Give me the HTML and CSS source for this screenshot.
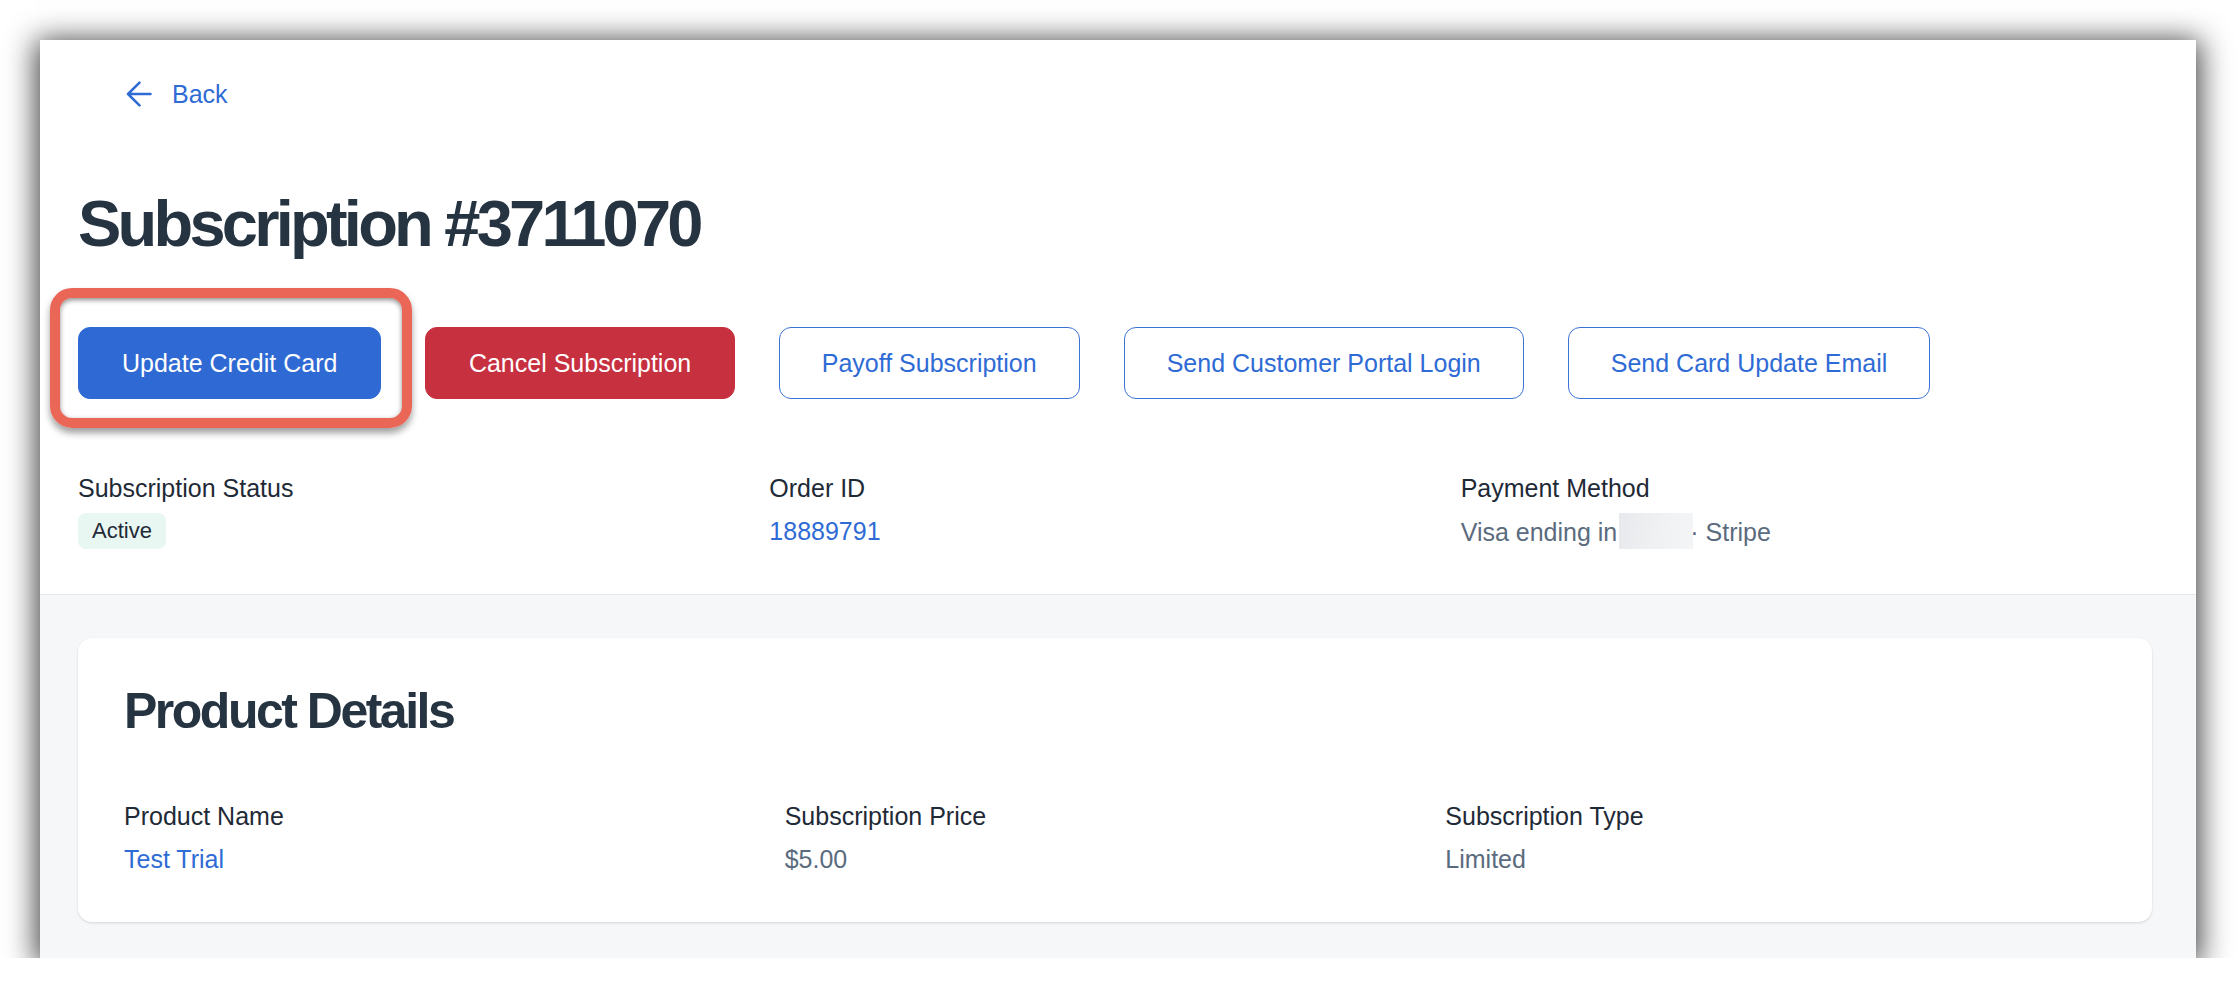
FILE: index.html
```html
<!DOCTYPE html>
<html lang="en">
<head>
<meta charset="utf-8">
<title>Subscription #3711070</title>
<link rel="stylesheet" href="styles.css">
</head>
<body>
<div class="window">
  <header class="header">
    <a class="back" href="#">
      <svg class="back-icon" width="26" height="26" viewBox="0 0 26 26" fill="none" stroke="currentColor" stroke-width="2.5" stroke-linecap="round" stroke-linejoin="round"><path d="M2 13 L13.5 1.6 M2 13 L13.5 24.4 M2 13 H24.5"/></svg>
      <span>Back</span>
    </a>
    <h1 class="title">Subscription #3711070</h1>
    <div class="actions">
      <div class="highlight-wrap">
        <button class="btn btn-primary">Update Credit Card</button>
        <span class="highlight"></span>
      </div>
      <button class="btn btn-danger">Cancel Subscription</button>
      <button class="btn btn-outline">Payoff Subscription</button>
      <button class="btn btn-outline">Send Customer Portal Login</button>
      <button class="btn btn-outline">Send Card Update Email</button>
    </div>
    <div class="info-grid">
      <div class="field">
        <div class="label">Subscription Status</div>
        <div class="value"><span class="badge">Active</span></div>
      </div>
      <div class="field">
        <div class="label">Order ID</div>
        <div class="value"><a class="link" href="#">18889791</a></div>
      </div>
      <div class="field">
        <div class="label">Payment Method</div>
        <div class="value muted">Visa ending in<span class="mask"></span>· Stripe</div>
      </div>
    </div>
  </header>
  <main class="content">
    <section class="card">
      <h2 class="card-title">Product Details</h2>
      <div class="card-grid">
        <div class="field">
          <div class="label">Product Name</div>
          <div class="value"><a class="link" href="#">Test Trial</a></div>
        </div>
        <div class="field">
          <div class="label">Subscription Price</div>
          <div class="value muted">$5.00</div>
        </div>
        <div class="field">
          <div class="label">Subscription Type</div>
          <div class="value muted">Limited</div>
        </div>
      </div>
    </section>
  </main>
</div>
</body>
</html>
```

FILE: styles.css
```css
* { box-sizing: border-box; }

html, body {
  margin: 0;
  padding: 0;
  background: #ffffff;
  font-family: "Liberation Sans", Arial, Helvetica, sans-serif;
  overflow: hidden;
}

.window {
  margin: 40px 40px 0 40px;
  width: 2156px;
  height: 918px;
  background: #ffffff;
  box-shadow: 0 4px 28px 4px rgba(0, 0, 0, 0.74);
  display: flex;
  flex-direction: column;
  overflow: hidden;
}

.header {
  padding: 35.5px 44px 43px 38px;
  border-bottom: 1px solid #e4e6ea;
}

.back {
  display: inline-flex;
  align-items: center;
  gap: 20px;
  margin-left: 48px;
  height: 37.5px;
  color: #2f6bd5;
  text-decoration: none;
  font-size: 25px;
  line-height: 37.5px;
}

.back-icon { display: block; }

.title {
  margin: 72px 0 0 0;
  font-size: 65px;
  line-height: 78px;
  font-weight: 700;
  letter-spacing: -0.058em;
  color: #263442;
}

.actions {
  margin-top: 64px;
  display: flex;
  gap: 44px;
}

.highlight-wrap {
  position: relative;
  display: flex;
}

.highlight {
  position: absolute;
  left: -28px;
  top: -39px;
  right: -31px;
  bottom: -29px;
  border: 10px solid #ea6656;
  border-radius: 22px;
  box-shadow: 0 5px 7px rgba(0, 0, 0, 0.38), inset 0 2px 5px rgba(0, 0, 0, 0.45);
  pointer-events: none;
}

.btn {
  height: 72px;
  padding: 0 43px;
  border: 1px solid transparent;
  border-radius: 12px;
  font-family: inherit;
  font-size: 25px;
  line-height: 70px;
  cursor: pointer;
  white-space: nowrap;
}

.btn-primary {
  background: #2f69d3;
  border-color: #2f69d3;
  color: #ffffff;
}

.btn-danger {
  padding: 0 42.5px;
  background: #c7303f;
  border-color: #c7303f;
  color: #ffffff;
}

.btn-outline {
  padding: 0 42px;
  background: #ffffff;
  border-color: #3b72d6;
  color: #2f6bd5;
}

.info-grid {
  margin-top: 70.5px;
  display: grid;
  grid-template-columns: repeat(3, 1fr);
}

.label {
  font-size: 25px;
  line-height: 37.5px;
  color: #1f2a37;
}

.value {
  margin-top: 5.5px;
  min-height: 37.5px;
  font-size: 25px;
  line-height: 37.5px;
  color: #1f2a37;
}

.muted { color: #5b6b7e; }

.link {
  color: #2f6bd5;
  text-decoration: none;
}

.badge {
  display: inline-block;
  height: 36.5px;
  padding: 0 14px;
  border-radius: 8px;
  background: #e9f7f2;
  color: #1f2a37;
  font-size: 22px;
  line-height: 36.5px;
  vertical-align: top;
}

.mask {
  position: relative;
  z-index: 1;
  display: inline-block;
  width: 74px;
  height: 36px;
  margin-left: 2px;
  margin-right: -3px;
  vertical-align: -8px;
  background: linear-gradient(100deg, #e8e9ec 0%, #f0f1f3 55%, #f4f5f7 100%);
}

.content {
  flex: 1;
  background: #f6f7f9;
  padding: 43px 44px 0 38px;
}

.card {
  background: #ffffff;
  border-radius: 14px;
  box-shadow: 0 1px 3px rgba(0, 0, 0, 0.09), 0 1px 2px rgba(0, 0, 0, 0.05);
  padding: 42.5px 46px 43.5px 46px;
}

.card-title {
  margin: 0;
  font-size: 50px;
  line-height: 60px;
  font-weight: 700;
  letter-spacing: -0.05em;
  color: #263442;
}

.card-grid {
  margin-top: 57px;
  display: grid;
  grid-template-columns: repeat(3, 1fr);
}
```
